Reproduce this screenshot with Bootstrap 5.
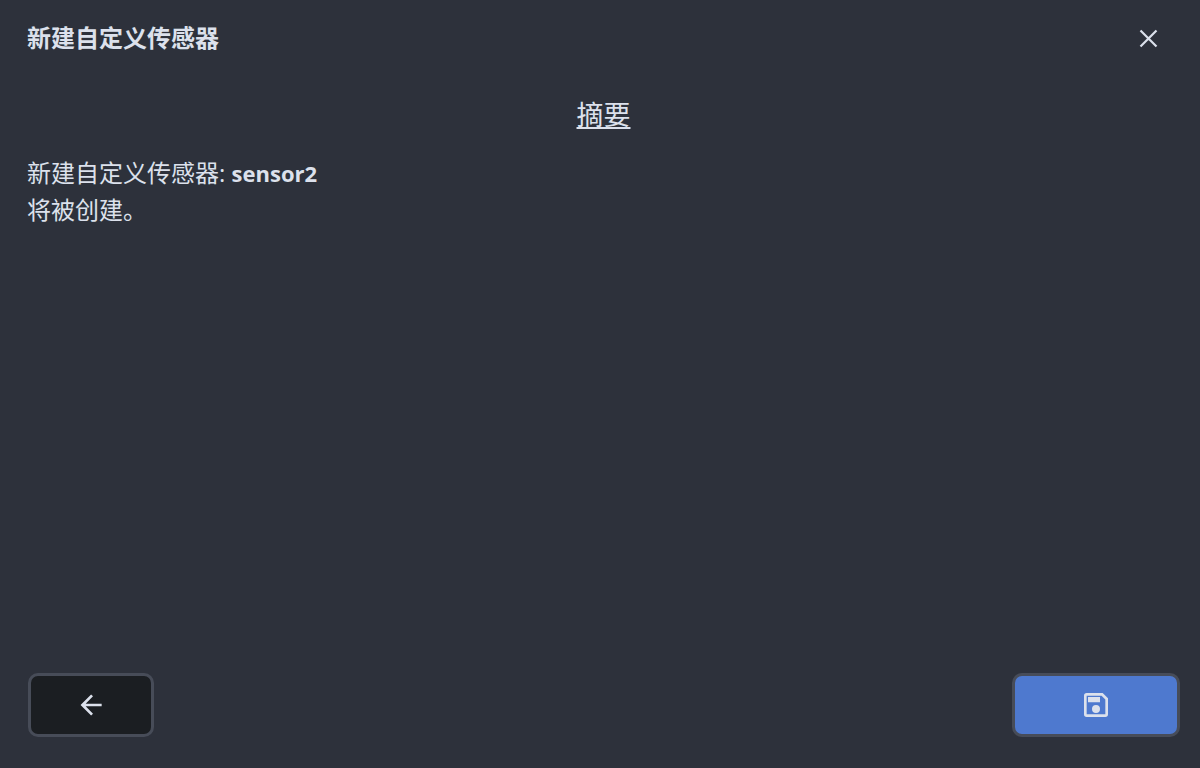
<!DOCTYPE html>
<html lang="zh-CN">
<head>
<meta charset="utf-8">
<meta name="viewport" content="width=device-width, initial-scale=1">
<title>新建自定义传感器</title>
<link href="https://cdn.jsdelivr.net/npm/bootstrap@5.3.0/dist/css/bootstrap.min.css" rel="stylesheet">
<style>
body { background: #2d313b; color: #dce1ec; font: 24px/37px "Open Sans", "Noto Sans CJK SC", sans-serif; }
.wizard { padding: 20px 0 31px; }
.wizard-head, .wizard-body { padding: 0 20px 0 27px; }
.wizard-foot { padding: 0 20px 0 28px; }
.wizard-title { font-size: 24px; line-height: 36px; }
.summary-title { font-size: 27px; line-height: 40px; margin: 39px 0 19px; text-decoration: underline; text-decoration-thickness: 2px; text-underline-offset: 2px; }
.sensor-name { font-size: 22px; line-height: 36px; }
.close-btn { width: 36px; height: 36px; margin-right: 14px; color: inherit; }
.action-btn { height: 64px; border: 3px solid #474c58; border-radius: 10px; }
.action-btn, .action-btn:hover { color: #dce1ec; }
.back-btn, .back-btn:hover { width: 126px; background: #1b1e22; border-color: #474c58; }
.save-btn, .save-btn:hover { width: 168px; background: #4e79cf; border-color: #474c58; }
</style>
</head>
<body>
<main class="wizard min-vh-100 d-flex flex-column">
  <header class="wizard-head d-flex justify-content-between align-items-center">
    <h1 class="wizard-title fw-bold m-0">新建自定义传感器</h1>
    <button type="button" class="close-btn btn p-0 border-0 d-flex align-items-center justify-content-center" aria-label="关闭">
      <svg width="19" height="19" viewBox="0 0 19 19" fill="none" stroke="currentColor" stroke-width="2.2" aria-hidden="true"><path d="M1.5 1.5 17.5 17.5M17.5 1.5 1.5 17.5"/></svg>
    </button>
  </header>
  <section class="wizard-body flex-grow-1">
    <h2 class="summary-title text-center fw-normal">摘要</h2>
    <p class="m-0">新建自定义传感器: <strong class="sensor-name">sensor2</strong><br>将被创建。</p>
  </section>
  <footer class="wizard-foot d-flex justify-content-between">
    <button type="button" class="action-btn back-btn btn p-0 d-flex align-items-center justify-content-center" aria-label="返回">
      <svg width="32" height="32" viewBox="0 0 24 24" fill="currentColor" aria-hidden="true"><path d="M20 11v2H8l5.5 5.5-1.42 1.42L4.16 12l7.92-7.92L13.5 5.5 8 11h12Z"/></svg>
    </button>
    <button type="button" class="action-btn save-btn btn p-0 d-flex align-items-center justify-content-center" aria-label="保存">
      <svg width="32" height="32" viewBox="0 0 24 24" fill="currentColor" aria-hidden="true"><path d="M17 3H5a2 2 0 0 0-2 2v14a2 2 0 0 0 2 2h14a2 2 0 0 0 2-2V7l-4-4Zm2 16H5V5h11.17L19 7.83V19Zm-7-7a3 3 0 1 0 0 6 3 3 0 0 0 0-6ZM6 6h9v4H6V6Z"/></svg>
    </button>
  </footer>
</main>
<script src="https://cdn.jsdelivr.net/npm/bootstrap@5.3.0/dist/js/bootstrap.bundle.min.js"></script>
</body>
</html>
